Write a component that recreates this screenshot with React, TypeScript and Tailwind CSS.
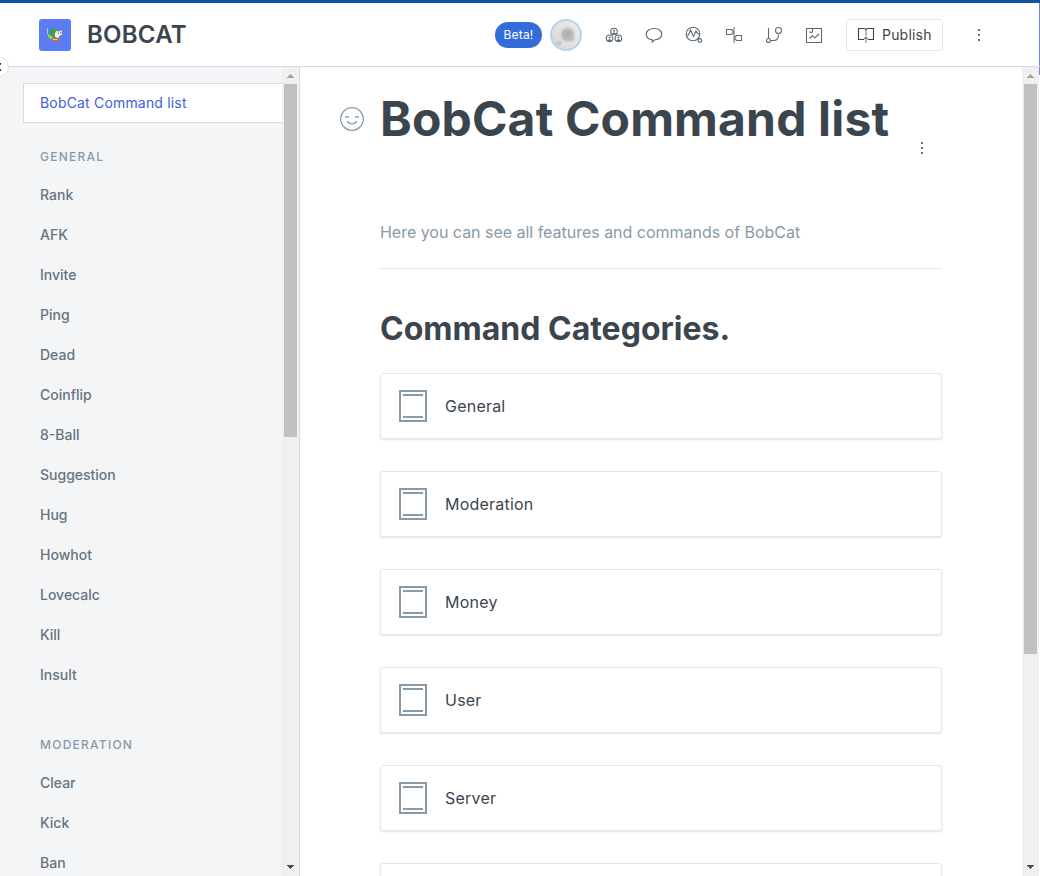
import React from "react";

const general = ["Rank", "AFK", "Invite", "Ping", "Dead", "Coinflip", "8-Ball", "Suggestion", "Hug", "Howhot", "Lovecalc", "Kill", "Insult"];
const moderation = ["Clear", "Kick", "Ban"];
const categories = ["General", "Moderation", "Money", "User", "Server"];

function Icon({ children }: { children: React.ReactNode }) {
  return (
    <svg width="20" height="20" viewBox="0 0 20 20" fill="none" stroke="#5c6975" strokeWidth="1.1" className="shrink-0">
      {children}
    </svg>
  );
}

function Logo() {
  return (
    <div className="flex size-8 items-center justify-center rounded-[3px] bg-[#5b7cf5]">
      <svg width="18" height="18" viewBox="0 0 18 18">
        <path d="M1.5 2.500v5L4 12.500" fill="none" stroke="#c9c8d4" strokeWidth="1" />
        <path d="M3 9C3 5 5 2 8 2c3 0 4 2 4 4l-3 6-5 1z" fill="#2fa84c" />
        <path d="M3 9l3 1.500 1 3-3-1z" fill="#e7d038" />
        <ellipse cx="9.300" cy="13.500" rx="4.500" ry="2.100" fill="#a8824e" />
        <path d="M7 13.500h4.500" stroke="#e8c98c" strokeWidth="1" />
        <path d="M10 4l1.500 1 2.500-.3 2-1.700.3 3c.8 2-.8 4-2.300 4l-1 2c-2 .8-4-.4-4.500-2C8 8 9 6.500 10 4z" fill="#f1f1f2" stroke="#55555f" strokeWidth=".6" />
        <circle cx="12.500" cy="7" r=".6" fill="#333" />
        <circle cx="14.800" cy="6.700" r=".6" fill="#333" />
      </svg>
    </div>
  );
}

function Avatar() {
  return (
    <svg width="32" height="32" viewBox="0 0 32 32" className="ml-2">
      <defs>
        <radialGradient id="fur">
          <stop offset="0" stopColor="#adadb2" />
          <stop offset=".55" stopColor="#b9b9bc" />
          <stop offset="1" stopColor="#dededf" stopOpacity="0" />
        </radialGradient>
        <linearGradient id="snow" x1="1" y1="0" x2="0" y2="1">
          <stop offset="0" stopColor="#eeedeb" />
          <stop offset=".7" stopColor="#dfdedd" />
          <stop offset="1" stopColor="#cbcbcb" />
        </linearGradient>
        <clipPath id="face">
          <circle cx="16" cy="16" r="15" />
        </clipPath>
      </defs>
      <circle cx="16" cy="16" r="15" fill="url(#snow)" />
      <g clipPath="url(#face)">
        <ellipse cx="17.500" cy="15.500" rx="9" ry="9.500" fill="url(#fur)" />
        <ellipse cx="9" cy="24" rx="4.500" ry="3.500" fill="url(#fur)" opacity=".5" />
        <ellipse cx="21" cy="20" rx="5" ry="4" fill="url(#fur)" opacity=".5" />
      </g>
      <circle cx="16" cy="16" r="15" fill="none" stroke="#b1d3f3" strokeWidth="2" />
    </svg>
  );
}

function Dots({ className }: { className: string }) {
  return (
    <svg width="4" height="14" viewBox="0 0 4 14" fill="#65717c" className={className}>
      <path d="M1 1h2v2H1zM1 6h2v2H1zM1 11h2v2H1z" />
    </svg>
  );
}

function Header() {
  return (
    <header className="flex h-[67px] shrink-0 border-t-[3px] border-b border-t-[#14539b] border-b-[#d3dce4] bg-white">
      <div className="flex min-w-0 flex-1 items-center pl-[39px]">
        <Logo />
        <h2 className="ml-4 text-[24px] leading-8 font-semibold tracking-[0.25px] text-[#3b454e]">BOBCAT</h2>
        <div className="flex-1" />
        <span className="flex h-[26px] w-[47px] items-center justify-center rounded-full bg-[#346ddb] text-[12px] tracking-[0.15px] text-white">Beta!</span>
        <Avatar />
        <div className="ml-[22px] flex gap-5">
          <Icon>
            <circle cx="10" cy="6.500" r="3.300" />
            <circle cx="5.600" cy="13.300" r="3.300" />
            <circle cx="14.400" cy="13.300" r="3.300" />
            <g fill="#5c6975" stroke="none">
              <circle cx="10" cy="5.800" r="1" />
              <circle cx="5.600" cy="12.600" r="1" />
              <circle cx="14.400" cy="12.600" r="1" />
              <path d="M8.300 8.300c.7-1 2.700-1 3.400 0v.8H8.300zM3.900 15.100c.7-1 2.700-1 3.400 0v.8H3.900zM12.700 15.100c.7-1 2.700-1 3.400 0v.8h-3.400z" />
            </g>
          </Icon>
          <Icon>
            <path d="M8.300 14.700C4.700 14.300 2.300 12 2.300 9.200 2.300 5.700 5.700 3.500 10 3.500s7.700 2.200 7.700 5.700-3.200 5.500-6.700 5.500L8.300 17z" />
          </Icon>
          <Icon>
            <circle cx="9" cy="9" r="6.800" />
            <path d="M2 10h2.500L6.500 5l3 6.500L12 6l2 3h2M13.300 13.300l1.200 1.200" />
            <circle cx="15.800" cy="15.500" r="1.900" />
          </Icon>
          <Icon>
            <path d="M10 2v16" stroke="#aab2bb" strokeWidth="2" />
            <path d="M2.500 4.500h5L9 6v2L7.500 9.500h-5zM17.500 10.500h-5L11 12v2l1.500 1.500h5z" />
          </Icon>
          <Icon>
            <path d="M4.500 3v10M6.500 15.500h3.500c3 0 4.500-2 4.500-6" />
            <circle cx="4.500" cy="15.500" r="2" />
            <circle cx="14.500" cy="5.500" r="3" />
          </Icon>
          <Icon>
            <path d="M2.500 3.500h15v14h-15z" />
            <path d="M8.500 3v3.200a1.300 1.300 0 0 1-2.600 0M5.500 13.500l3-3 2.200 2.500 4.300-4" />
          </Icon>
        </div>
        <button className="ml-[22px] flex h-8 w-[97px] items-center rounded-[3px] border border-[#e3e8ed] pl-[9px] text-[14px] tracking-[0.2px] text-[#3b454e]">
          <svg width="20" height="20" viewBox="0 0 20 20" fill="none" stroke="#3b454e" strokeWidth="1.1" className="mr-1.5">
            <path d="M8 14.500H2.500v-11H8c1 0 2 .5 2 1.500M12 14.500h5.500v-11H12c-1 0-2 .5-2 1.500" />
            <path d="M10 5v6M10 18v-5M8 14l2-2 2 2" stroke="#7b8288" />
          </svg>
          Publish
        </button>
        <Dots className="mr-[58px] ml-[34px]" />
      </div>
      <div className="w-px bg-[#6d87df]" />
    </header>
  );
}

function Scrollbar({ thumb }: { thumb: string }) {
  return (
    <div className="flex w-[17px] shrink-0 flex-col items-center bg-[#f0f0f0]">
      <svg width="17" height="17" viewBox="0 0 17 17" shapeRendering="crispEdges" className="shrink-0">
        <path d="M5 11v-1h1V9h1V8h1V7h1v1h1v1h1v1h1v1z" fill="#a3a3a3" />
      </svg>
      <div className={"w-[13px] shrink-0 bg-[#c1c1c1] " + thumb} />
      <div className="flex-1" />
      <svg width="17" height="17" viewBox="0 0 17 17" shapeRendering="crispEdges" className="shrink-0">
        <path d="M5 6v1h1v1h1v1h1v1h1V9h1V8h1V7h1V6z" fill="#505050" />
      </svg>
    </div>
  );
}

function Group({ title, items }: { title: string; items: string[] }) {
  return (
    <section className="pl-10">
      <h3 className="flex h-[38px] items-center pt-0.5 text-[12px] font-medium tracking-[1.25px] text-[#8899a8]">{title}</h3>
      <ul>
        {items.map((name) => (
          <li key={name} className="flex h-10 items-center pb-0.5 text-[14px] font-medium text-[#66747f]">{name}</li>
        ))}
      </ul>
    </section>
  );
}

function Sidebar() {
  return (
    <aside className="flex w-[300px] shrink-0 border-r border-[#d3dce4] bg-[#f3f5f7]">
      <div className="flex min-w-0 flex-1 flex-col overflow-hidden pt-4">
        <div className="ml-[23px] flex h-10 shrink-0 items-center border border-r-0 border-[#d3dce4] bg-white pb-0.5 pl-4 text-[14px] tracking-[0.18px] text-[#4360dc]">BobCat Command list</div>
        <div className="mt-[14px] flex flex-col gap-[30px]">
          <Group title="GENERAL" items={general} />
          <Group title="MODERATION" items={moderation} />
        </div>
      </div>
      <Scrollbar thumb="h-[353px]" />
    </aside>
  );
}

function Card({ name }: { name?: string }) {
  return (
    <div className="flex h-[66px] shrink-0 items-center rounded-[3px] border border-[#e3e8ed] bg-white pl-[18px] shadow-[0_1px_2px_rgba(116,129,141,0.22)]">
      <svg width="28" height="32" viewBox="0 0 28 32" fill="none" stroke="#8899a8" strokeWidth="2">
        <path d="M1 1h26v30H1zM4 5h20M4 27h20" />
      </svg>
      {name && <span className="ml-[18px] text-[16px] tracking-[0.22px] text-[#3b454e]">{name}</span>}
    </div>
  );
}

function Content() {
  return (
    <main className="flex min-w-0 flex-1 flex-col overflow-hidden bg-white pt-5 pr-20 pl-10">
      <div className="flex h-[64px] shrink-0">
        <svg width="24" height="24" viewBox="0 0 24 24" fill="none" stroke="#8899a8" strokeWidth="1.3" strokeLinecap="round" className="mt-5">
          <circle cx="12" cy="12" r="11.300" />
          <path d="M5.500 10.700c.5-1.800 2.500-1.800 3 0M15.500 10.700c.5-1.800 2.500-1.800 3 0M7.500 14.500c1.500 3.200 7.500 3.200 9 0" />
        </svg>
        <h1 className="ml-4 text-[48px] leading-[64px] font-bold tracking-[0.16px] whitespace-nowrap text-[#3b454e]">BobCat Command list</h1>
        <div className="flex-1" />
        <Dots className="mt-[54px] mr-[18px] shrink-0" />
      </div>
      <p className="mt-[69px] ml-10 h-6 shrink-0 text-[16px] leading-6 tracking-[-0.02px] text-[#8899a8]">Here you can see all features and commands of BobCat</p>
      <div className="mt-6 ml-10 h-px shrink-0 bg-[#e3e8ed]" />
      <h2 className="mt-10 ml-10 h-10 shrink-0 text-[32px] leading-10 font-bold text-[#3b454e]">Command Categories.</h2>
      <div className="mt-6 ml-10 flex flex-col gap-8">
        {categories.map((name) => <Card key={name} name={name} />)}
        <Card />
      </div>
    </main>
  );
}

export default function App() {
  return (
    <div className="relative flex h-[876px] w-[1040px] flex-col overflow-hidden bg-white font-['Inter',sans-serif]">
      <Header />
      <div className="flex min-h-0 flex-1">
        <Sidebar />
        <Content />
        <Scrollbar thumb="h-[570px]" />
        <div className="w-px shrink-0">
          <div className="h-2 bg-[#6d87df]" />
        </div>
      </div>
      <div className="absolute top-[57px] -left-[11px] size-5 rounded-full border border-[#dfe5eb] bg-white">
        <svg width="18" height="18" viewBox="0 0 18 18" fill="none" stroke="#3b454e" strokeWidth="1.200">
          <path d="M11.300 5.500h-1v1.500M11.300 12.500h-1V11" />
        </svg>
      </div>
    </div>
  );
}
